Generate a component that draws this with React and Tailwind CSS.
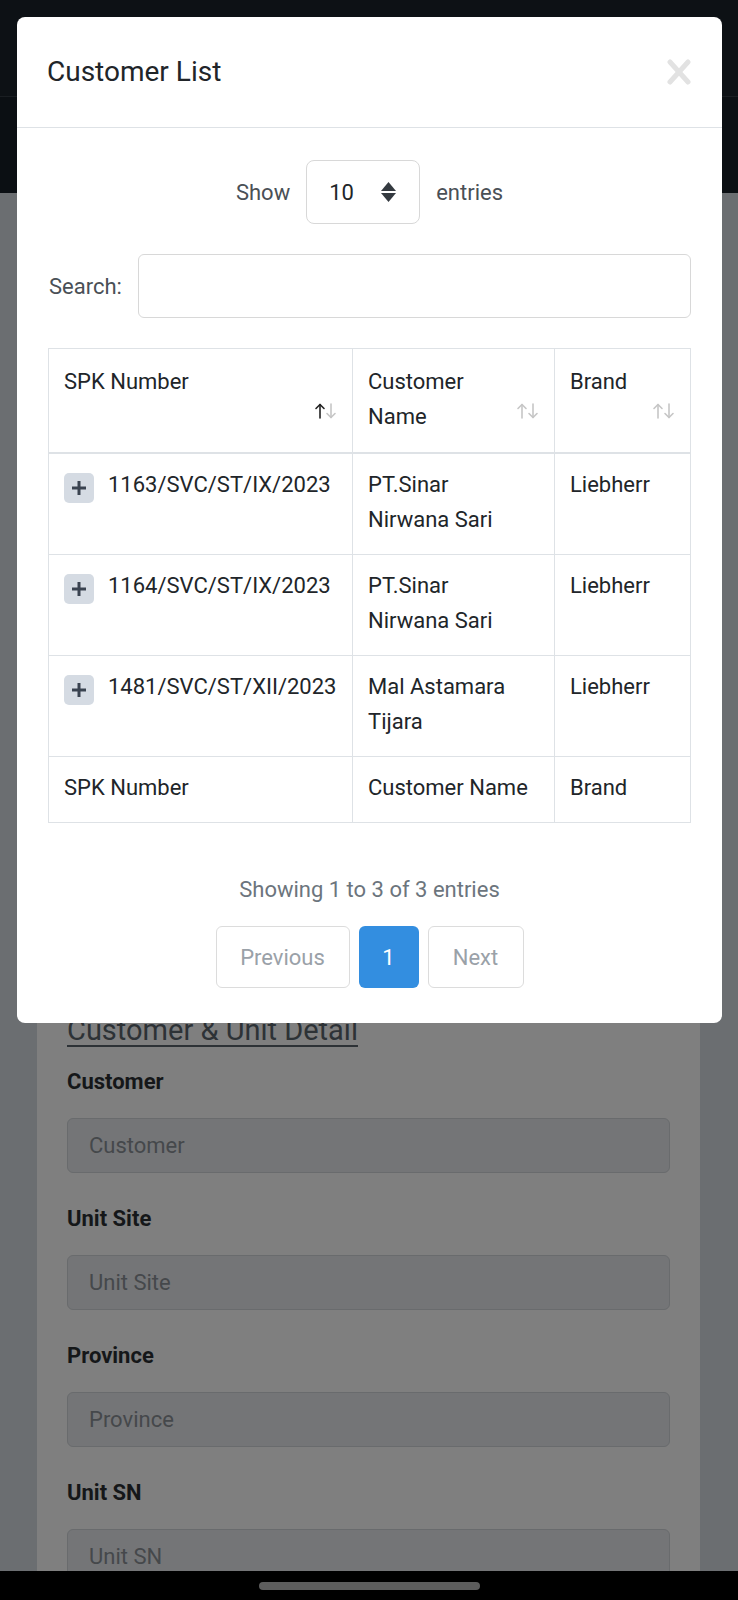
import React from "react";

function SortIcon({ active }) {
  return (
    <svg width="24" height="16" viewBox="0 0 24 16" className="shrink-0 mb-[15px]">
      <g fill="none" strokeWidth="1.6" strokeLinecap="round" strokeLinejoin="round">
        <g stroke={active ? "#222222" : "#c6c6c6"}>
          <line x1="6" y1="1.5" x2="6" y2="15" />
          <polyline points="2,5.5 6,1.5 10,5.5" />
        </g>
        <g stroke="#c6c6c6">
          <line x1="17" y1="1" x2="17" y2="14.5" />
          <polyline points="13,10.5 17,14.5 21,10.5" />
        </g>
      </g>
    </svg>
  );
}

function PlusBtn() {
  return (
    <div className="mt-[6px] w-[30px] h-[30px] shrink-0 rounded-[5px] bg-[#d5dbe3] flex items-center justify-center">
      <svg width="14" height="14" viewBox="0 0 14 14">
        <g stroke="#3a4350" strokeWidth="3">
          <line x1="7" y1="0" x2="7" y2="14" />
          <line x1="0" y1="7" x2="14" y2="7" />
        </g>
      </svg>
    </div>
  );
}

const rows = [
  { spk: "1163/SVC/ST/IX/2023", c1: "PT.Sinar", c2: "Nirwana Sari", brand: "Liebherr" },
  { spk: "1164/SVC/ST/IX/2023", c1: "PT.Sinar", c2: "Nirwana Sari", brand: "Liebherr" },
  { spk: "1481/SVC/ST/XII/2023", c1: "Mal Astamara", c2: "Tijara", brand: "Liebherr" },
];

function Field({ label }) {
  return (
    <div className="mb-[29px]">
      <div className="text-[22px] leading-[33px] font-bold text-[#151719] mb-[20px]">{label}</div>
      <div className="h-[55px] rounded-[6px] border border-[#696b6d] bg-[#747577] flex items-center pl-[21px] text-[22px] text-[#45484b]">
        {label}
      </div>
    </div>
  );
}

export default function App() {
  const cell = "border-r border-b border-[#dee2e6] pl-[15px] pr-[14px] pt-[13px] pb-[17px] text-[22px] leading-[35px] text-[#212529]";
  const head = "border-r border-b-2 border-[#dee2e6] pl-[15px] pr-[14px] pt-[15px] pb-[18px] text-[22px] leading-[35px] text-[#212529] flex items-end justify-between";
  return (
    <div className="relative w-full h-[1600px] overflow-hidden flex flex-col font-[family-name:Roboto,'Noto_Sans',sans-serif]">
      {/* dimmed navbar */}
      <div className="h-[97px] bg-[#0d1115] border-b border-[#1a1e22] shrink-0" />
      <div className="h-[96px] bg-[#0b0f13] shrink-0" />
      {/* dimmed page */}
      <div className="flex-1 bg-[#6b6e71] overflow-hidden">
        <div className="ml-[37px] w-[663px] mt-[36px] bg-[#7f7f7f] px-[30px] pt-[781px] h-[2000px]">
          <div className="text-[29px] leading-[40px] text-[#2d3236] underline underline-offset-[5px] decoration-[2px] mb-[15px]">
            Customer &amp; Unit Detail
          </div>
          <Field label="Customer" />
          <Field label="Unit Site" />
          <Field label="Province" />
          <Field label="Unit SN" />
        </div>
      </div>
      {/* system nav bar */}
      <div className="h-[29px] bg-black shrink-0 flex justify-center pt-[11px]">
        <div className="w-[221px] h-[8px] rounded-full bg-[#5d5d5d]" />
      </div>

      {/* modal */}
      <div className="absolute left-[17px] top-[17px] w-[705px] h-[1006px] bg-white rounded-[8px] flex flex-col">
        <div className="h-[111px] border-b border-[#dee2e6] flex items-center justify-between pl-[30px] pr-[31px] shrink-0">
          <div className="text-[28px] leading-[34px] text-[#212529]">Customer List</div>
          <svg width="24" height="26" viewBox="0 0 24 26">
            <g stroke="#e2e2e2" strokeWidth="5" strokeLinecap="round">
              <line x1="3" y1="3" x2="21" y2="23" />
              <line x1="21" y1="3" x2="3" y2="23" />
            </g>
          </svg>
        </div>

        <div className="flex flex-col pl-[31px] pr-[31px] pt-[32px]">
          {/* show entries */}
          <div className="flex items-center justify-center gap-[16px] text-[22px] text-[#4a5056]">
            <span>Show</span>
            <div className="w-[114px] h-[64px] rounded-[8px] border border-[#d8d8d8] flex items-center justify-between pl-[22px] pr-[23px]">
              <span className="text-[#212529]">10</span>
              <svg width="15" height="20" viewBox="0 0 15 20">
                <polygon points="7.5,0 15,9 0,9" fill="#343a40" />
                <polygon points="0,11 15,11 7.5,20" fill="#343a40" />
              </svg>
            </div>
            <span>entries</span>
          </div>

          {/* search */}
          <div className="mt-[30px] flex items-center gap-[16px]">
            <span className="text-[22px] text-[#4a5056] pl-[1px]">Search:</span>
            <div className="flex-1 h-[64px] rounded-[6px] border border-[#d8d8d8]" />
          </div>

          {/* table */}
          <div className="mt-[30px] grid grid-cols-[304px_202px_1fr] border-l border-t border-[#dee2e6]">
            <div className={head}>
              <span className="self-start">SPK Number</span>
              <SortIcon active />
            </div>
            <div className={head}>
              <span className="self-start">Customer<br />Name</span>
              <SortIcon />
            </div>
            <div className={head}>
              <span className="self-start">Brand</span>
              <SortIcon />
            </div>

            {rows.map((r, i) => (
              <React.Fragment key={i}>
                <div className={cell + " flex items-start gap-[14px]"}>
                  <PlusBtn />
                  <span className="whitespace-nowrap">{r.spk}</span>
                </div>
                <div className={cell}>
                  {r.c1}
                  <br />
                  {r.c2}
                </div>
                <div className={cell}>{r.brand}</div>
              </React.Fragment>
            ))}

            <div className={cell}>SPK Number</div>
            <div className={cell + " whitespace-nowrap"}>Customer Name</div>
            <div className={cell}>Brand</div>
          </div>

          <div className="mt-[50px] text-center text-[22px] leading-[33px] text-[#6c757d]">
            Showing 1 to 3 of 3 entries
          </div>

          <div className="mt-[20px] flex justify-center gap-[9px] text-[22px]">
            <div className="h-[62px] w-[134px] rounded-[6px] border border-[#dcdcdc] flex items-center justify-center text-[#9aa1a8]">
              Previous
            </div>
            <div className="h-[62px] w-[60px] rounded-[6px] bg-[#338ee0] flex items-center justify-center text-white">
              1
            </div>
            <div className="h-[62px] w-[96px] rounded-[6px] border border-[#dcdcdc] flex items-center justify-center text-[#9aa1a8]">
              Next
            </div>
          </div>
        </div>
      </div>
    </div>
  );
}
